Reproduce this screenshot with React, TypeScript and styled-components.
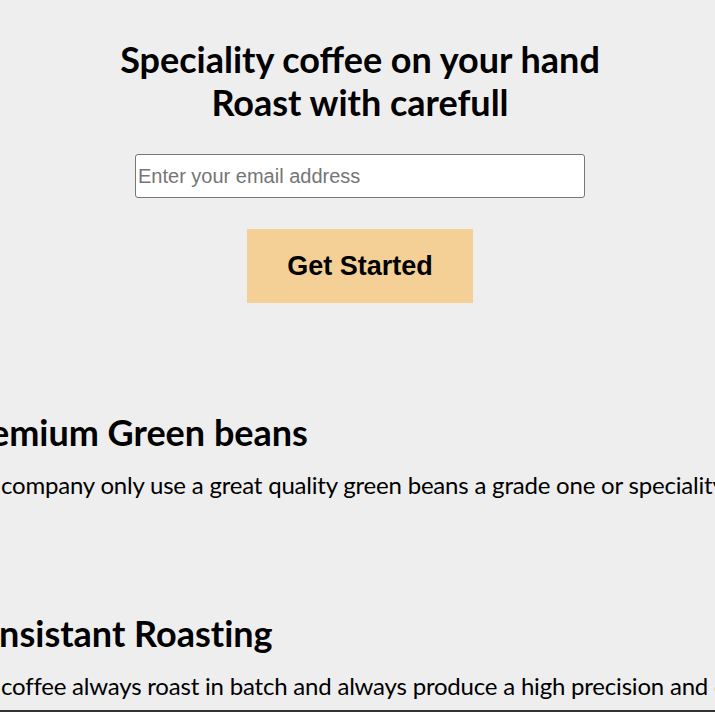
import styled, { createGlobalStyle } from "styled-components";

const GlobalStyle = createGlobalStyle`
  body {
    margin: 0;
    background: #eeeeee;
    font-family: Lato, "Liberation Sans", sans-serif;
    color: #000;
    overflow-x: hidden;
  }
`;

const Hero = styled.section`
  display: flex;
  flex-direction: column;
  align-items: center;
  padding: 38px 0 0 5px;
`;

const Title = styled.h1`
  margin: 0;
  font-size: 36px;
  font-weight: 700;
  line-height: 43px;
  text-align: center;
`;

const EmailInput = styled.input`
  margin-top: 30px;
  width: 450px;
  height: 44px;
  box-sizing: border-box;
  padding: 1px 2px;
  border: 1px solid #767676;
  border-radius: 3px;
  background: #fff;
  font-family: "Liberation Sans", Arial, sans-serif;
  font-size: 20px;
  &::placeholder {
    color: #757575;
  }
`;

const StartButton = styled.button`
  margin-top: 31px;
  width: 226px;
  height: 74px;
  border: none;
  background: #f4d096;
  font-family: "Liberation Sans", Arial, sans-serif;
  font-size: 27px;
  font-weight: 700;
  color: #000;
  cursor: pointer;
`;

const Features = styled.div`
  display: flex;
  flex-direction: column;
  gap: 113px;
  margin: 108px 0 0 -45px;
`;

const Feature = styled.article`
  white-space: nowrap;
`;

const FeatureTitle = styled.h2`
  margin: 0;
  font-size: 36px;
  font-weight: 700;
  line-height: 43px;
  font-variant-ligatures: none;
`;

const FeatureText = styled.p`
  margin: 16px 0 0 0;
  font-size: 24px;
  line-height: 29px;
  letter-spacing: -0.2px;
`;

const Footer = styled.footer`
  margin-top: 10px;
  height: 120px;
  background: #333;
`;

const features = [
  {
    title: "Premium Green beans",
    text: "Our company only use a great quality green beans a grade one or speciality grade beans",
  },
  {
    title: "Consistant Roasting",
    text: "Our coffee always roast in batch and always produce a high precision and consistant roast",
  },
];

export default function App() {
  return (
    <>
      <GlobalStyle />
      <Hero>
        <Title>
          Speciality coffee on your hand
          <br />
          Roast with carefull
        </Title>
        <EmailInput type="email" placeholder="Enter your email address" />
        <StartButton>Get Started</StartButton>
      </Hero>
      <Features>
        {features.map((f) => (
          <Feature key={f.title}>
            <FeatureTitle>{f.title}</FeatureTitle>
            <FeatureText>{f.text}</FeatureText>
          </Feature>
        ))}
      </Features>
      <Footer />
    </>
  );
}
